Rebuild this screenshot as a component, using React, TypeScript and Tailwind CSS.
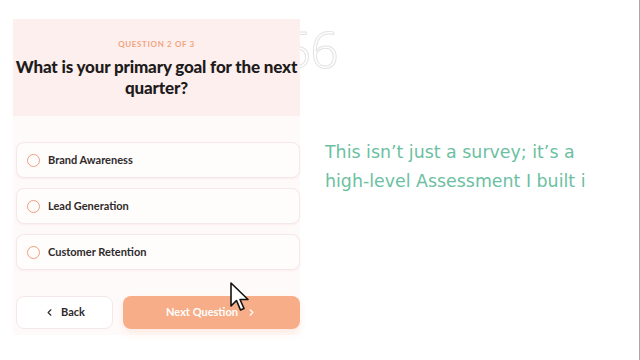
import { ChevronLeft, ChevronRight } from "lucide-react";

const options = ["Brand Awareness", "Lead Generation", "Customer Retention"];

export default function App() {
  return (
    <div className="relative w-[640px] h-[360px] bg-white overflow-hidden flex" style={{ fontFamily: "Lato, 'Noto Sans', sans-serif" }}>
      {/* ghost counter behind the card */}
      <div className="absolute left-[283px] top-[24px] text-[50px] leading-none font-light text-transparent [-webkit-text-stroke:1px_#e3e3e3] tracking-tight" style={{ fontFamily: "'Noto Sans', sans-serif" }}>
        56
      </div>

      <div className="relative z-10 ml-[13px] mt-[19px] w-[287px] h-[316px] flex flex-col bg-[#fffafa]">
        <div className="h-[97px] bg-[#fdefee] overflow-hidden text-center pt-[21px]">
          <p className="text-[8px] tracking-[0.08em] font-bold text-[#f2a47e] leading-none">QUESTION 2 OF 3</p>
          <h1 className="mt-[8px] text-[17px] font-black text-[#1e1b1b] leading-[21px] tracking-[-0.01em]">
            <span className="block whitespace-nowrap">What is your primary goal for the next</span>
            <span className="block">quarter?</span>
          </h1>
        </div>

        <div className="flex flex-col gap-[10px] pt-[26px] pr-0 pl-[3px]">
          {options.map((o) => (
            <div key={o} className="h-[36px] rounded-lg border border-[#f6e8e8] bg-[#fffcfc] flex items-center pl-[10px] gap-[8px] shadow-[0_1px_2px_rgba(240,200,200,0.25)]">
              <span className="w-[13px] h-[13px] rounded-full border-[1.5px] border-[#ee9f80]" />
              <span className="text-[11px] font-bold text-[#2e2a2a]">{o}</span>
            </div>
          ))}
        </div>

        <div className="flex gap-[10px] pl-[3px] mt-[26px]">
          <button className="w-[97px] h-[33px] rounded-lg border border-[#f6e8e8] bg-white flex items-center justify-center gap-[6px] text-[11px] font-bold text-[#2e2a2a]">
            <ChevronLeft className="w-[11px] h-[11px]" strokeWidth={2.5} />
            Back
          </button>
          <button className="flex-1 h-[33px] rounded-lg bg-[#f7ad87] flex items-center justify-center gap-[8px] text-[11px] font-bold text-white shadow-[0_4px_8px_rgba(247,173,135,0.2)]">
            Next Question
            <ChevronRight className="w-[11px] h-[11px]" strokeWidth={2.5} />
          </button>
        </div>
      </div>

      <div className="relative z-10 ml-[25px] pt-[138px] text-[17.4px] leading-[29px] text-[#6cc0a1]" style={{ fontFamily: "'DejaVu Sans', sans-serif" }}>
        <p className="whitespace-nowrap">This isn’t just a survey; it’s a</p>
        <p className="whitespace-nowrap">high-level Assessment I built i</p>
      </div>

      <div className="absolute right-0 top-0 w-px h-full bg-[#a8a8a8]" />

      {/* mouse cursor */}
      <svg className="absolute left-[229px] top-[281px] z-20" width="22" height="32" viewBox="0 0 22 32">
        <path d="M2 2 L2 25 L7.5 19.5 L11.5 29 L15 27.5 L11 18.5 L19 18.5 Z" fill="#fff" stroke="#111" strokeWidth="1.6" strokeLinejoin="round" />
      </svg>
    </div>
  );
}
